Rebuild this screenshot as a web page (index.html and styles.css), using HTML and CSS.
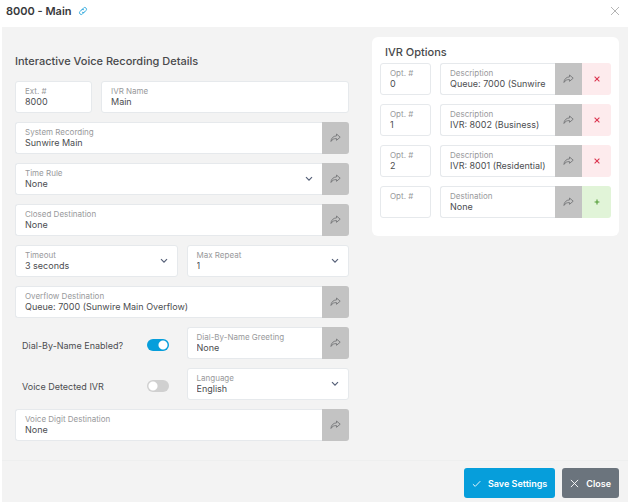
FILE: index.html
```html
<!DOCTYPE html>
<html lang="en">
<head>
  <meta charset="UTF-8">
  <meta name="viewport" content="width=device-width, initial-scale=1.0">
  <title>8000 - Main</title>
  <link rel="stylesheet" href="styles.css">
</head>
<body>
  <!-- Shared icons -->
  <svg class="sprite" aria-hidden="true">
    <symbol id="icon-share" viewBox="0 0 16 14">
      <path d="M9.5 1.2 L14.8 5.8 L9.5 10.4 V7.9 C5.6 7.7 3.4 8.8 1.4 12 C1.6 7.3 4.6 4.2 9.5 3.9 Z"/>
    </symbol>
    <symbol id="icon-chevron" viewBox="0 0 8 6">
      <path d="M1 1.2 L4 4.2 L7 1.2"/>
    </symbol>
    <symbol id="icon-x" viewBox="0 0 10 10">
      <path d="M1 1 L9 9 M9 1 L1 9"/>
    </symbol>
  </svg>

  <header class="modal-header">
    <h1>8000 - Main</h1>
    <a href="#" class="permalink" aria-label="Copy link">
      <svg viewBox="0 0 16 16"><g transform="rotate(-45 8 8)"><path d="M9.5 10.8 H4 A2.8 2.8 0 0 1 4 5.2 H8 A2.8 2.8 0 0 1 10.4 8"/><path d="M5.6 8 A2.8 2.8 0 0 0 8 10.8 H12 A2.8 2.8 0 0 0 12 5.2 H6.5"/></g></svg>
    </a>
    <button type="button" class="dismiss" aria-label="Dismiss"><svg><use href="#icon-x"/></svg></button>
  </header>

  <main class="modal-body">
    <section class="details">
      <h2>Interactive Voice Recording Details</h2>

      <div class="row row-name">
        <div class="field">
          <label for="ext">Ext. #</label>
          <input id="ext" type="text" value="8000">
        </div>
        <div class="field">
          <label for="name">IVR Name</label>
          <input id="name" type="text" value="Main">
        </div>
      </div>

      <div class="group">
        <div class="field">
          <label for="recording">System Recording</label>
          <input id="recording" type="text" value="Sunwire Main">
        </div>
        <button type="button" class="addon" aria-label="Open recording"><svg><use href="#icon-share"/></svg></button>
      </div>

      <div class="group">
        <div class="field select">
          <label for="rule">Time Rule</label>
          <select id="rule"><option>None</option></select>
          <svg class="chevron"><use href="#icon-chevron"/></svg>
        </div>
        <button type="button" class="addon" aria-label="Open time rule"><svg><use href="#icon-share"/></svg></button>
      </div>

      <div class="group">
        <div class="field">
          <label for="closed">Closed Destination</label>
          <input id="closed" type="text" value="None">
        </div>
        <button type="button" class="addon" aria-label="Open closed destination"><svg><use href="#icon-share"/></svg></button>
      </div>

      <div class="row row-half">
        <div class="field select">
          <label for="timeout">Timeout</label>
          <select id="timeout"><option>3 seconds</option></select>
          <svg class="chevron"><use href="#icon-chevron"/></svg>
        </div>
        <div class="field select">
          <label for="repeat">Max Repeat</label>
          <select id="repeat"><option>1</option></select>
          <svg class="chevron"><use href="#icon-chevron"/></svg>
        </div>
      </div>

      <div class="group">
        <div class="field">
          <label for="overflow">Overflow Destination</label>
          <input id="overflow" type="text" value="Queue: 7000 (Sunwire Main Overflow)">
        </div>
        <button type="button" class="addon" aria-label="Open overflow destination"><svg><use href="#icon-share"/></svg></button>
      </div>

      <div class="row row-half">
        <div class="toggle">
          <label for="dial">Dial-By-Name Enabled?</label>
          <input id="dial" type="checkbox" checked>
        </div>
        <div class="group">
          <div class="field">
            <label for="greeting">Dial-By-Name Greeting</label>
            <input id="greeting" type="text" value="None">
          </div>
          <button type="button" class="addon" aria-label="Open greeting"><svg><use href="#icon-share"/></svg></button>
        </div>
      </div>

      <div class="row row-half">
        <div class="toggle">
          <label for="voice">Voice Detected IVR</label>
          <input id="voice" type="checkbox">
        </div>
        <div class="field select">
          <label for="language">Language</label>
          <select id="language"><option>English</option></select>
          <svg class="chevron"><use href="#icon-chevron"/></svg>
        </div>
      </div>

      <div class="group">
        <div class="field">
          <label for="digit">Voice Digit Destination</label>
          <input id="digit" type="text" value="None">
        </div>
        <button type="button" class="addon" aria-label="Open voice digit destination"><svg><use href="#icon-share"/></svg></button>
      </div>
    </section>

    <section class="options">
      <h2>IVR Options</h2>

      <div class="row row-option">
        <div class="field">
          <label for="opt0">Opt. #</label>
          <input id="opt0" type="text" value="0">
        </div>
        <div class="group">
          <div class="field">
            <label for="desc0">Description</label>
            <input id="desc0" type="text" value="Queue: 7000 (Sunwire">
          </div>
          <button type="button" class="addon" aria-label="Open"><svg><use href="#icon-share"/></svg></button>
          <button type="button" class="addon remove" aria-label="Remove"><svg><use href="#icon-x"/></svg></button>
        </div>
      </div>

      <div class="row row-option">
        <div class="field">
          <label for="opt1">Opt. #</label>
          <input id="opt1" type="text" value="1">
        </div>
        <div class="group">
          <div class="field">
            <label for="desc1">Description</label>
            <input id="desc1" type="text" value="IVR: 8002 (Business)">
          </div>
          <button type="button" class="addon" aria-label="Open"><svg><use href="#icon-share"/></svg></button>
          <button type="button" class="addon remove" aria-label="Remove"><svg><use href="#icon-x"/></svg></button>
        </div>
      </div>

      <div class="row row-option">
        <div class="field">
          <label for="opt2">Opt. #</label>
          <input id="opt2" type="text" value="2">
        </div>
        <div class="group">
          <div class="field">
            <label for="desc2">Description</label>
            <input id="desc2" type="text" value="IVR: 8001 (Residential)">
          </div>
          <button type="button" class="addon" aria-label="Open"><svg><use href="#icon-share"/></svg></button>
          <button type="button" class="addon remove" aria-label="Remove"><svg><use href="#icon-x"/></svg></button>
        </div>
      </div>

      <div class="row row-option">
        <div class="field">
          <label for="opt3">Opt. #</label>
          <input id="opt3" type="text">
        </div>
        <div class="group">
          <div class="field">
            <label for="desc3">Destination</label>
            <input id="desc3" type="text" value="None">
          </div>
          <button type="button" class="addon" aria-label="Open"><svg><use href="#icon-share"/></svg></button>
          <button type="button" class="addon add" aria-label="Add"><svg viewBox="0 0 10 10"><path d="M5 1 V9 M1 5 H9"/></svg></button>
        </div>
      </div>
    </section>
  </main>

  <footer class="modal-footer">
    <button type="submit" class="btn btn-save">
      <svg viewBox="0 0 10 10"><path d="M1 5.8 L3.6 8.2 L9.2 2.4"/></svg>
      Save Settings
    </button>
    <button type="button" class="btn btn-close">
      <svg viewBox="0 0 10 10"><use href="#icon-x"/></svg>
      Close
    </button>
  </footer>
</body>
</html>
```

FILE: styles.css
```css
/* Global Styles */
* {
  margin: 0;
  padding: 0;
  box-sizing: border-box;
}

body {
  min-height: 100vh;
  padding-left: 2px;
  display: flex;
  flex-direction: column;
  background: #fff;
  color: #4c4d50;
  font-family: Inter, sans-serif;
  font-size: 9px;
}

button,
input,
select {
  font: inherit;
  color: inherit;
  border: 0;
}

button {
  cursor: pointer;
}

svg {
  display: block;
  fill: none;
  stroke: currentColor;
}

.sprite {
  display: none;
}

/* Header */
.modal-header {
  display: flex;
  align-items: center;
  gap: 6px;
  height: 27px;
  padding: 0 8px 6px 4px;
}

.modal-header h1 {
  font-size: 11px;
  font-weight: 600;
  line-height: 16px;
  color: #38393b;
}

.permalink {
  color: #2ba6dc;
}

.permalink svg {
  width: 10px;
  height: 10px;
  stroke-width: 1.3;
}

.dismiss {
  margin-left: auto;
  background: none;
  color: #b5b5b5;
}

.dismiss svg {
  width: 10px;
  height: 10px;
}

/* Body */
.modal-body {
  flex: 1;
  display: grid;
  grid-template-columns: 334fr 247fr;
  align-items: start;
  gap: 23px;
  padding: 10px 9px 19px 13px;
  background: #f3f3f3;
}

h2 {
  font-size: 11px;
  font-weight: 500;
  line-height: 16px;
  color: #48494b;
}

.details {
  display: grid;
  gap: 9px;
  padding-top: 16px;
}

.details h2 {
  margin-bottom: 3px;
}

.options {
  display: grid;
  gap: 9px;
  padding: 7px 8px 18px;
  background: #fff;
  border-radius: 6px;
}

.options h2 {
  margin-bottom: -6px;
  padding-left: 5px;
}

/* Fields */
.row {
  display: grid;
  gap: 9px;
}

.row-name {
  grid-template-columns: 77fr 248fr;
}

.row-half {
  grid-template-columns: 1fr 1fr;
}

.row-option {
  grid-template-columns: 51fr 171fr;
}

.field {
  position: relative;
  min-width: 0;
  padding: 4px 9px;
  background: #fff;
  border: 1px solid #e6e9ec;
  border-radius: 3px;
}

.field label {
  display: block;
  font-size: 8px;
  line-height: 10px;
  color: #98999b;
  white-space: nowrap;
}

.field input,
.field select {
  display: block;
  width: 100%;
  height: 12px;
  line-height: 12px;
  background: none;
  outline: none;
  appearance: none;
}

.chevron {
  position: absolute;
  top: 50%;
  right: 9px;
  width: 8px;
  height: 6px;
  margin-top: -3px;
  color: #566078;
  stroke-width: 1.2;
  pointer-events: none;
}

.group {
  display: flex;
}

.group .field {
  flex: 1;
  padding-right: 4px;
  border-right: 0;
  border-radius: 3px 0 0 3px;
}

.addon {
  flex: none;
  display: flex;
  align-items: center;
  justify-content: center;
  width: 27px;
  background: #c3c3c3;
  color: #6f7072;
}

.addon:last-child {
  border-radius: 0 3px 3px 0;
}

.addon svg {
  width: 11px;
  height: 10px;
  stroke-width: 1.2;
}

.addon.remove,
.addon.add {
  width: 29px;
}

.addon.remove svg,
.addon.add svg {
  width: 6px;
  height: 6px;
  stroke-width: 1.8;
}

.addon.remove {
  background: #fdebed;
  color: #dc3550;
}

.addon.add {
  background: #e1f4d8;
  color: #4f9a33;
}

/* Toggles */
.toggle {
  display: flex;
  align-items: center;
  justify-content: space-between;
  padding: 4px 9px 0 7px;
}

.toggle input {
  width: 22px;
  height: 12px;
  border-radius: 6px;
  background: radial-gradient(circle at 6px 6px, #fff 4px, transparent 5px) #d0d0d0;
  appearance: none;
}

.toggle input:checked {
  background: radial-gradient(circle at 16px 6px, #fff 4px, transparent 5px) #069edb;
}

/* Footer */
.modal-footer {
  display: flex;
  justify-content: flex-end;
  gap: 7px;
  padding: 7px 9px 4px;
  background: #f3f3f3;
  border-top: 1px solid #eeefef;
}

.btn {
  display: flex;
  align-items: center;
  gap: 7px;
  height: 30px;
  padding: 0 8px;
  border-radius: 3px;
  color: #fff;
  font-weight: 600;
}

.btn svg {
  width: 9px;
  height: 9px;
}

.btn-save {
  background: #069edb;
}

.btn-close {
  background: #6b747d;
}
```
